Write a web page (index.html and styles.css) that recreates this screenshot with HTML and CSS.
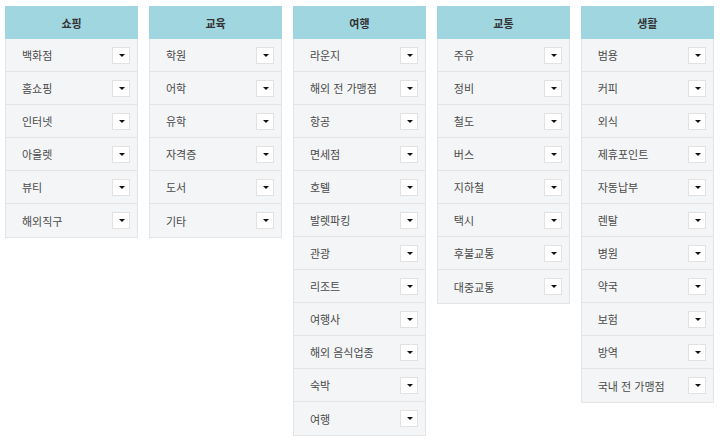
FILE: index.html
```html
<!DOCTYPE html>
<html lang="ko">
<head>
    <meta charset="UTF-8">
    <link rel="stylesheet" href="styles.css">
    <title>카테고리</title>
</head>
<body>
    <div class="board">
        <div class="col">
            <div class="head">쇼핑</div>
            <div class="row"><span>백화점</span><button class="sel"></button></div>
            <div class="row"><span>홈쇼핑</span><button class="sel"></button></div>
            <div class="row"><span>인터넷</span><button class="sel"></button></div>
            <div class="row"><span>아울렛</span><button class="sel"></button></div>
            <div class="row"><span>뷰티</span><button class="sel"></button></div>
            <div class="row"><span>해외직구</span><button class="sel"></button></div>
        </div>
        <div class="col">
            <div class="head">교육</div>
            <div class="row"><span>학원</span><button class="sel"></button></div>
            <div class="row"><span>어학</span><button class="sel"></button></div>
            <div class="row"><span>유학</span><button class="sel"></button></div>
            <div class="row"><span>자격증</span><button class="sel"></button></div>
            <div class="row"><span>도서</span><button class="sel"></button></div>
            <div class="row"><span>기타</span><button class="sel"></button></div>
        </div>
        <div class="col">
            <div class="head">여행</div>
            <div class="row"><span>라운지</span><button class="sel"></button></div>
            <div class="row"><span>해외 전 가맹점</span><button class="sel"></button></div>
            <div class="row"><span>항공</span><button class="sel"></button></div>
            <div class="row"><span>면세점</span><button class="sel"></button></div>
            <div class="row"><span>호텔</span><button class="sel"></button></div>
            <div class="row"><span>발렛파킹</span><button class="sel"></button></div>
            <div class="row"><span>관광</span><button class="sel"></button></div>
            <div class="row"><span>리조트</span><button class="sel"></button></div>
            <div class="row"><span>여행사</span><button class="sel"></button></div>
            <div class="row"><span>해외 음식업종</span><button class="sel"></button></div>
            <div class="row"><span>숙박</span><button class="sel"></button></div>
            <div class="row"><span>여행</span><button class="sel"></button></div>
        </div>
        <div class="col">
            <div class="head">교통</div>
            <div class="row"><span>주유</span><button class="sel"></button></div>
            <div class="row"><span>정비</span><button class="sel"></button></div>
            <div class="row"><span>철도</span><button class="sel"></button></div>
            <div class="row"><span>버스</span><button class="sel"></button></div>
            <div class="row"><span>지하철</span><button class="sel"></button></div>
            <div class="row"><span>택시</span><button class="sel"></button></div>
            <div class="row"><span>후불교통</span><button class="sel"></button></div>
            <div class="row"><span>대중교통</span><button class="sel"></button></div>
        </div>
        <div class="col">
            <div class="head">생활</div>
            <div class="row"><span>범용</span><button class="sel"></button></div>
            <div class="row"><span>커피</span><button class="sel"></button></div>
            <div class="row"><span>외식</span><button class="sel"></button></div>
            <div class="row"><span>제휴포인트</span><button class="sel"></button></div>
            <div class="row"><span>자동납부</span><button class="sel"></button></div>
            <div class="row"><span>렌탈</span><button class="sel"></button></div>
            <div class="row"><span>병원</span><button class="sel"></button></div>
            <div class="row"><span>약국</span><button class="sel"></button></div>
            <div class="row"><span>보험</span><button class="sel"></button></div>
            <div class="row"><span>방역</span><button class="sel"></button></div>
            <div class="row"><span>국내 전 가맹점</span><button class="sel"></button></div>
        </div>
    </div>
</body>
</html>
```

FILE: styles.css
```css
body {
    margin: 0;
    background-color: #fff;
    font-family: "Noto Sans CJK KR", "Noto Sans", sans-serif;
    font-size: 11px;
    color: #4a4a4a;
}

.board {
    display: flex;
    align-items: flex-start;
    gap: 10.75px;
    padding: 6px 0 0 5px;
}

.col {
    width: 133.2px;
    box-sizing: border-box;
    border: 1px solid #e3e4e6;
    border-top: 0;
    background-color: #f4f5f7;
}

.head {
    height: 33px;
    margin: 0 -1px;
    background-color: #a0d6e0;
    color: #333;
    font-weight: bold;
    display: flex;
    align-items: center;
    justify-content: center;
}

.row {
    height: 33px;
    box-sizing: border-box;
    display: flex;
    align-items: center;
    justify-content: space-between;
    padding: 0 7px 0 16px;
    border-bottom: 1px solid #e3e4e6;
}

.row:last-child {
    border-bottom: 0;
}

.sel {
    width: 18px;
    height: 17px;
    padding: 0;
    border: 1px solid #e2e2e2;
    background-color: #fff;
    position: relative;
}

.sel::after {
    content: "";
    position: absolute;
    left: 6px;
    top: 6px;
    border-left: 3px solid transparent;
    border-right: 3px solid transparent;
    border-top: 3px solid #111;
}
```
